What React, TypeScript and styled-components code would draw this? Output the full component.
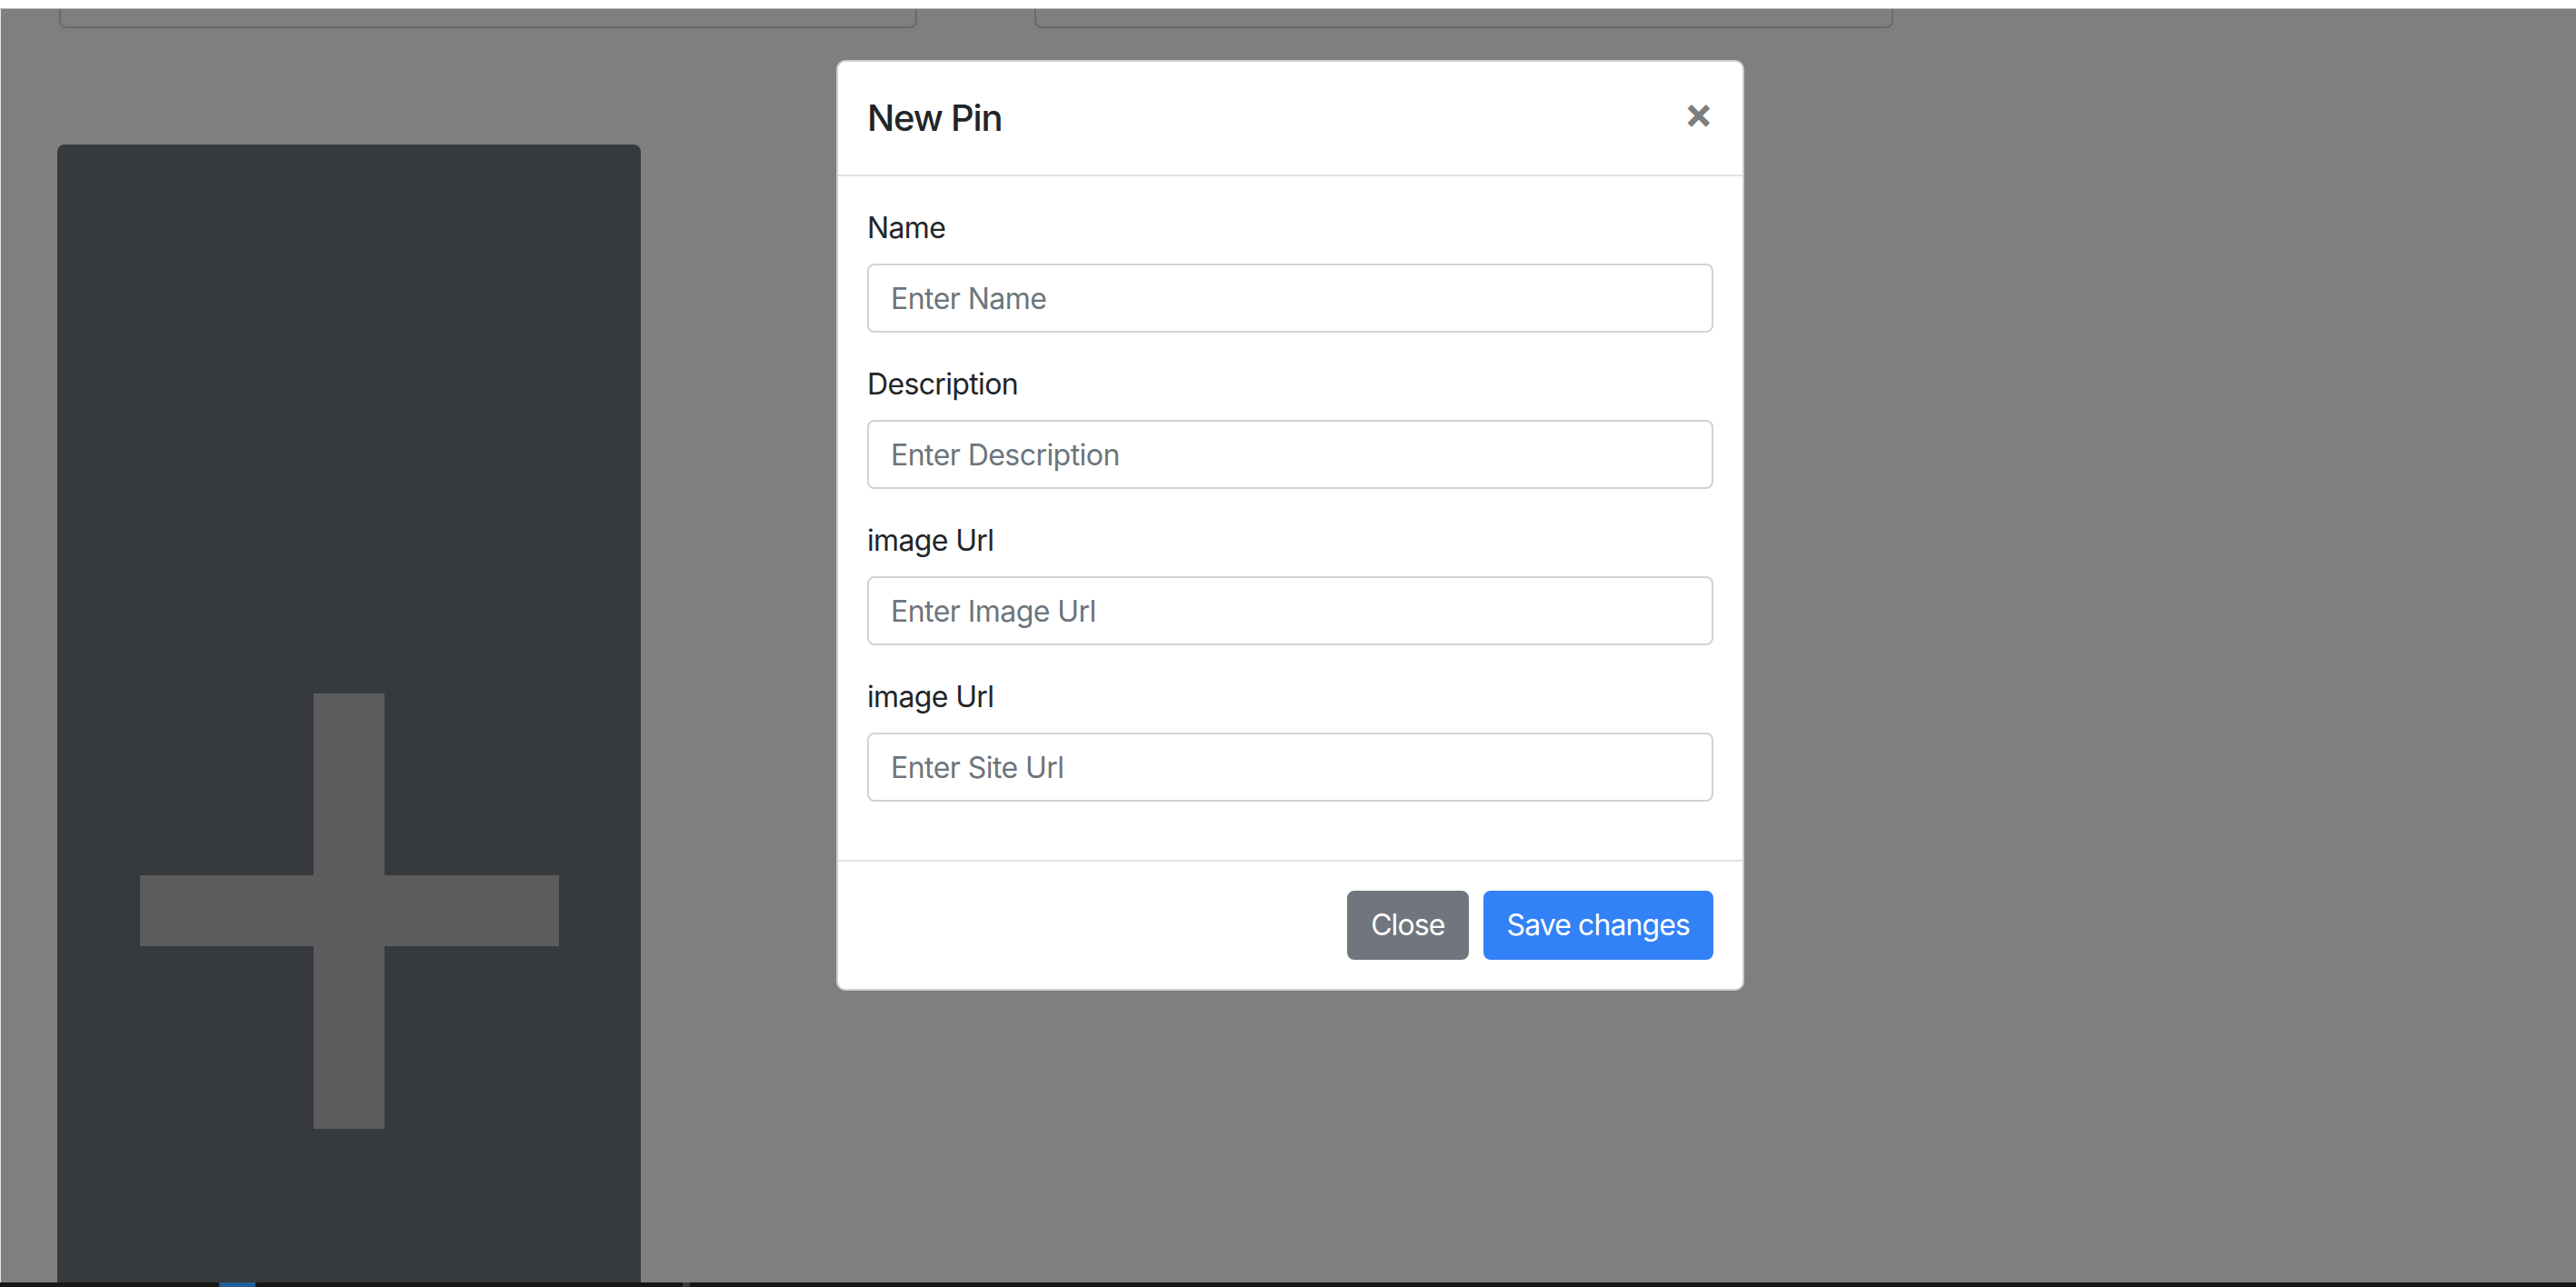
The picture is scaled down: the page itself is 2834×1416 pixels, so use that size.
import React from "react";
import styled, { createGlobalStyle } from "styled-components";

const GlobalStyle = createGlobalStyle`
  * { box-sizing: border-box; }
  html, body { margin: 0; padding: 0; }
  body {
    font-family: Inter, "Noto Sans", "Liberation Sans", sans-serif;
    color: #212529;
    background: #ffffff;
  }
`;

const Screen = styled.div`
  width: 2834px;
  height: 1416px;
  display: flex;
  flex-direction: column;
  overflow: hidden;
`;

const TopBar = styled.div`
  height: 10px;
  flex: 0 0 auto;
  background: #ffffff;
  border-bottom: 1px solid #b8b8b8;
`;

const BottomBar = styled.div`
  height: 5px;
  flex: 0 0 auto;
  background: #171717;
  display: flex;
  padding-left: 241px;
  gap: 470px;
`;

const BarMark = styled.span<{ $color: string; $w: number }>`
  width: ${(p) => p.$w}px;
  height: 100%;
  background: ${(p) => p.$color};
`;

const Viewport = styled.div`
  flex: 1 1 auto;
  position: relative;
  overflow: hidden;
  background: #ffffff;
  border-left: 1px solid #e6e6e6;
`;

const Page = styled.div`
  display: flex;
  flex-direction: column;
  align-items: flex-start;
  padding-left: 62px;
`;

const FieldRow = styled.div`
  display: flex;
  gap: 129px;
  margin-top: -55px;
  margin-left: 2px;
`;

const GhostInput = styled.div<{ $w: number }>`
  width: ${(p) => p.$w}px;
  height: 76px;
  border: 2px solid #ced4da;
  border-radius: 8px;
  background: #ffffff;
`;

const AddCard = styled.div`
  margin-top: 128px;
  width: 642px;
  height: 1687px;
  background: #6c757d;
  border-radius: 8px;
  display: flex;
  align-items: center;
  justify-content: center;
`;

const Backdrop = styled.div`
  position: absolute;
  inset: 0;
  background: rgba(0, 0, 0, 0.5);
`;

const ModalDialog = styled.div`
  position: absolute;
  top: 56px;
  left: 919px;
  width: 999px;
`;

const ModalContent = styled.div`
  display: flex;
  flex-direction: column;
  background: #ffffff;
  border: 2px solid rgba(0, 0, 0, 0.2);
  border-radius: 10px;
`;

const ModalHeader = styled.div`
  display: flex;
  align-items: flex-start;
  justify-content: space-between;
  padding: 32px;
  border-bottom: 2px solid #dee2e6;
`;

const ModalTitle = styled.h5`
  margin: 0;
  font-size: 40px;
  line-height: 60px;
  font-weight: 500;
  letter-spacing: -1.2px;
  color: #212529;
`;

const CloseX = styled.button`
  padding: 32px;
  margin: -32px -32px -32px auto;
  background: transparent;
  border: 0;
  font-family: Inter, "Liberation Sans", sans-serif;
  font-size: 48px;
  font-weight: 700;
  line-height: 1;
  color: #000000;
  opacity: 0.5;
  text-shadow: 0 2px 0 #ffffff;
  cursor: pointer;
`;

const ModalBody = styled.div`
  padding: 32px;
`;

const FormGroup = styled.div`
  margin-bottom: 32px;
`;

const Label = styled.label`
  display: block;
  padding-top: 1px;
  margin-bottom: 15px;
  font-size: 32px;
  line-height: 48px;
  font-weight: 400;
  letter-spacing: -0.65px;
  color: #212529;
`;

const Input = styled.input`
  display: block;
  width: 100%;
  height: 76px;
  padding: 12px 24px;
  font-family: Inter, "Noto Sans", sans-serif;
  font-size: 32px;
  line-height: 48px;
  letter-spacing: -0.55px;
  color: #495057;
  background: #ffffff;
  border: 2px solid #ced4da;
  border-radius: 8px;
  outline: none;
  &::placeholder {
    color: #6c757d;
    opacity: 1;
  }
`;

const ModalFooter = styled.div`
  display: flex;
  align-items: center;
  justify-content: flex-end;
  padding: 24px;
  border-top: 2px solid #dee2e6;
`;

const Button = styled.button<{ $variant: "secondary" | "primary" }>`
  margin: 8px;
  padding: 12px 24px;
  font-family: Inter, "Noto Sans", sans-serif;
  font-size: 32px;
  line-height: 48px;
  font-weight: 400;
  letter-spacing: -0.9px;
  color: #ffffff;
  border-radius: 8px;
  border: 2px solid
    ${(p) => (p.$variant === "primary" ? "#3381f6" : "#71767e")};
  background: ${(p) => (p.$variant === "primary" ? "#3381f6" : "#71767e")};
  cursor: pointer;
`;

const fields = [
  { label: "Name", placeholder: "Enter Name" },
  { label: "Description", placeholder: "Enter Description" },
  { label: "image Url", placeholder: "Enter Image Url" },
  { label: "image Url", placeholder: "Enter Site Url" },
];

function PlusIcon() {
  return (
    <svg width="461" height="479" viewBox="0 0 461 479">
      <rect x="0" y="200" width="461" height="78" fill="#b8b8b8" />
      <rect x="191" y="0" width="78" height="479" fill="#b8b8b8" />
    </svg>
  );
}

export default function App() {
  return (
    <Screen>
      <GlobalStyle />
      <TopBar />
      <Viewport>
        <Page>
          <FieldRow>
            <GhostInput $w={944} />
            <GhostInput $w={945} />
          </FieldRow>
          <AddCard>
            <PlusIcon />
          </AddCard>
        </Page>
        <Backdrop />
        <ModalDialog>
          <ModalContent>
            <ModalHeader>
              <ModalTitle>New Pin</ModalTitle>
              <CloseX aria-label="Close">×</CloseX>
            </ModalHeader>
            <ModalBody>
              {fields.map((f, i) => (
                <FormGroup key={i}>
                  <Label>{f.label}</Label>
                  <Input type="text" placeholder={f.placeholder} />
                </FormGroup>
              ))}
            </ModalBody>
            <ModalFooter>
              <Button $variant="secondary">Close</Button>
              <Button $variant="primary">Save changes</Button>
            </ModalFooter>
          </ModalContent>
        </ModalDialog>
      </Viewport>
      <BottomBar>
        <BarMark $color="#1f5f99" $w={40} />
        <BarMark $color="#3a3a3a" $w={8} />
      </BottomBar>
    </Screen>
  );
}
